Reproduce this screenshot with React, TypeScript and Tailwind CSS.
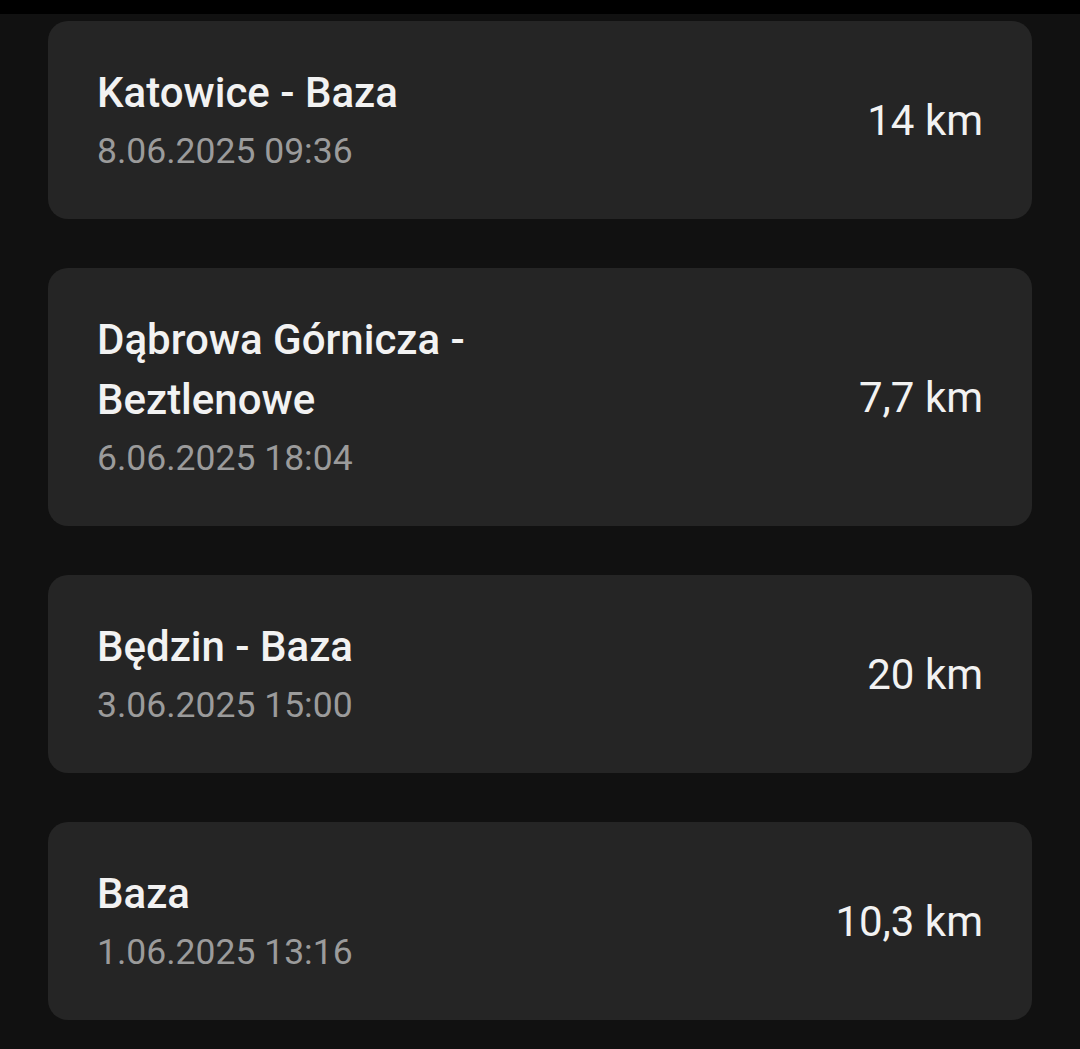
import React from "react";

const items = [
  { title: "Katowice - Baza", date: "8.06.2025 09:36", km: "14 km" },
  { title: "Dąbrowa Górnicza - Beztlenowe", date: "6.06.2025 18:04", km: "7,7 km" },
  { title: "Będzin - Baza", date: "3.06.2025 15:00", km: "20 km" },
  { title: "Baza", date: "1.06.2025 13:16", km: "10,3 km" },
];

export default function App() {
  return (
    <div className="w-[1080px] h-[1049px] bg-[#111111] overflow-hidden" style={{ fontFamily: "Roboto, sans-serif" }}>
      <div className="h-[14px] bg-black" />
      <div className="flex flex-col gap-[49px] pt-[7px] pl-[48px] pr-[48px]">
        {items.map((it) => (
          <div key={it.title} className="flex items-center justify-between rounded-[20px] bg-[#252525] pl-[49px] pr-[49px] pt-[42px] pb-[40px]">
            <div className="flex flex-col max-w-[430px]">
              <div className="text-[42px] leading-[60px] font-medium text-[#f2f2f2]">{it.title}</div>
              <div className="text-[35.5px] leading-[56px] text-[#9b9b9b]">{it.date}</div>
            </div>
            <div className="text-[42px] leading-[58px] text-[#f2f2f2]">{it.km}</div>
          </div>
        ))}
      </div>
    </div>
  );
}
